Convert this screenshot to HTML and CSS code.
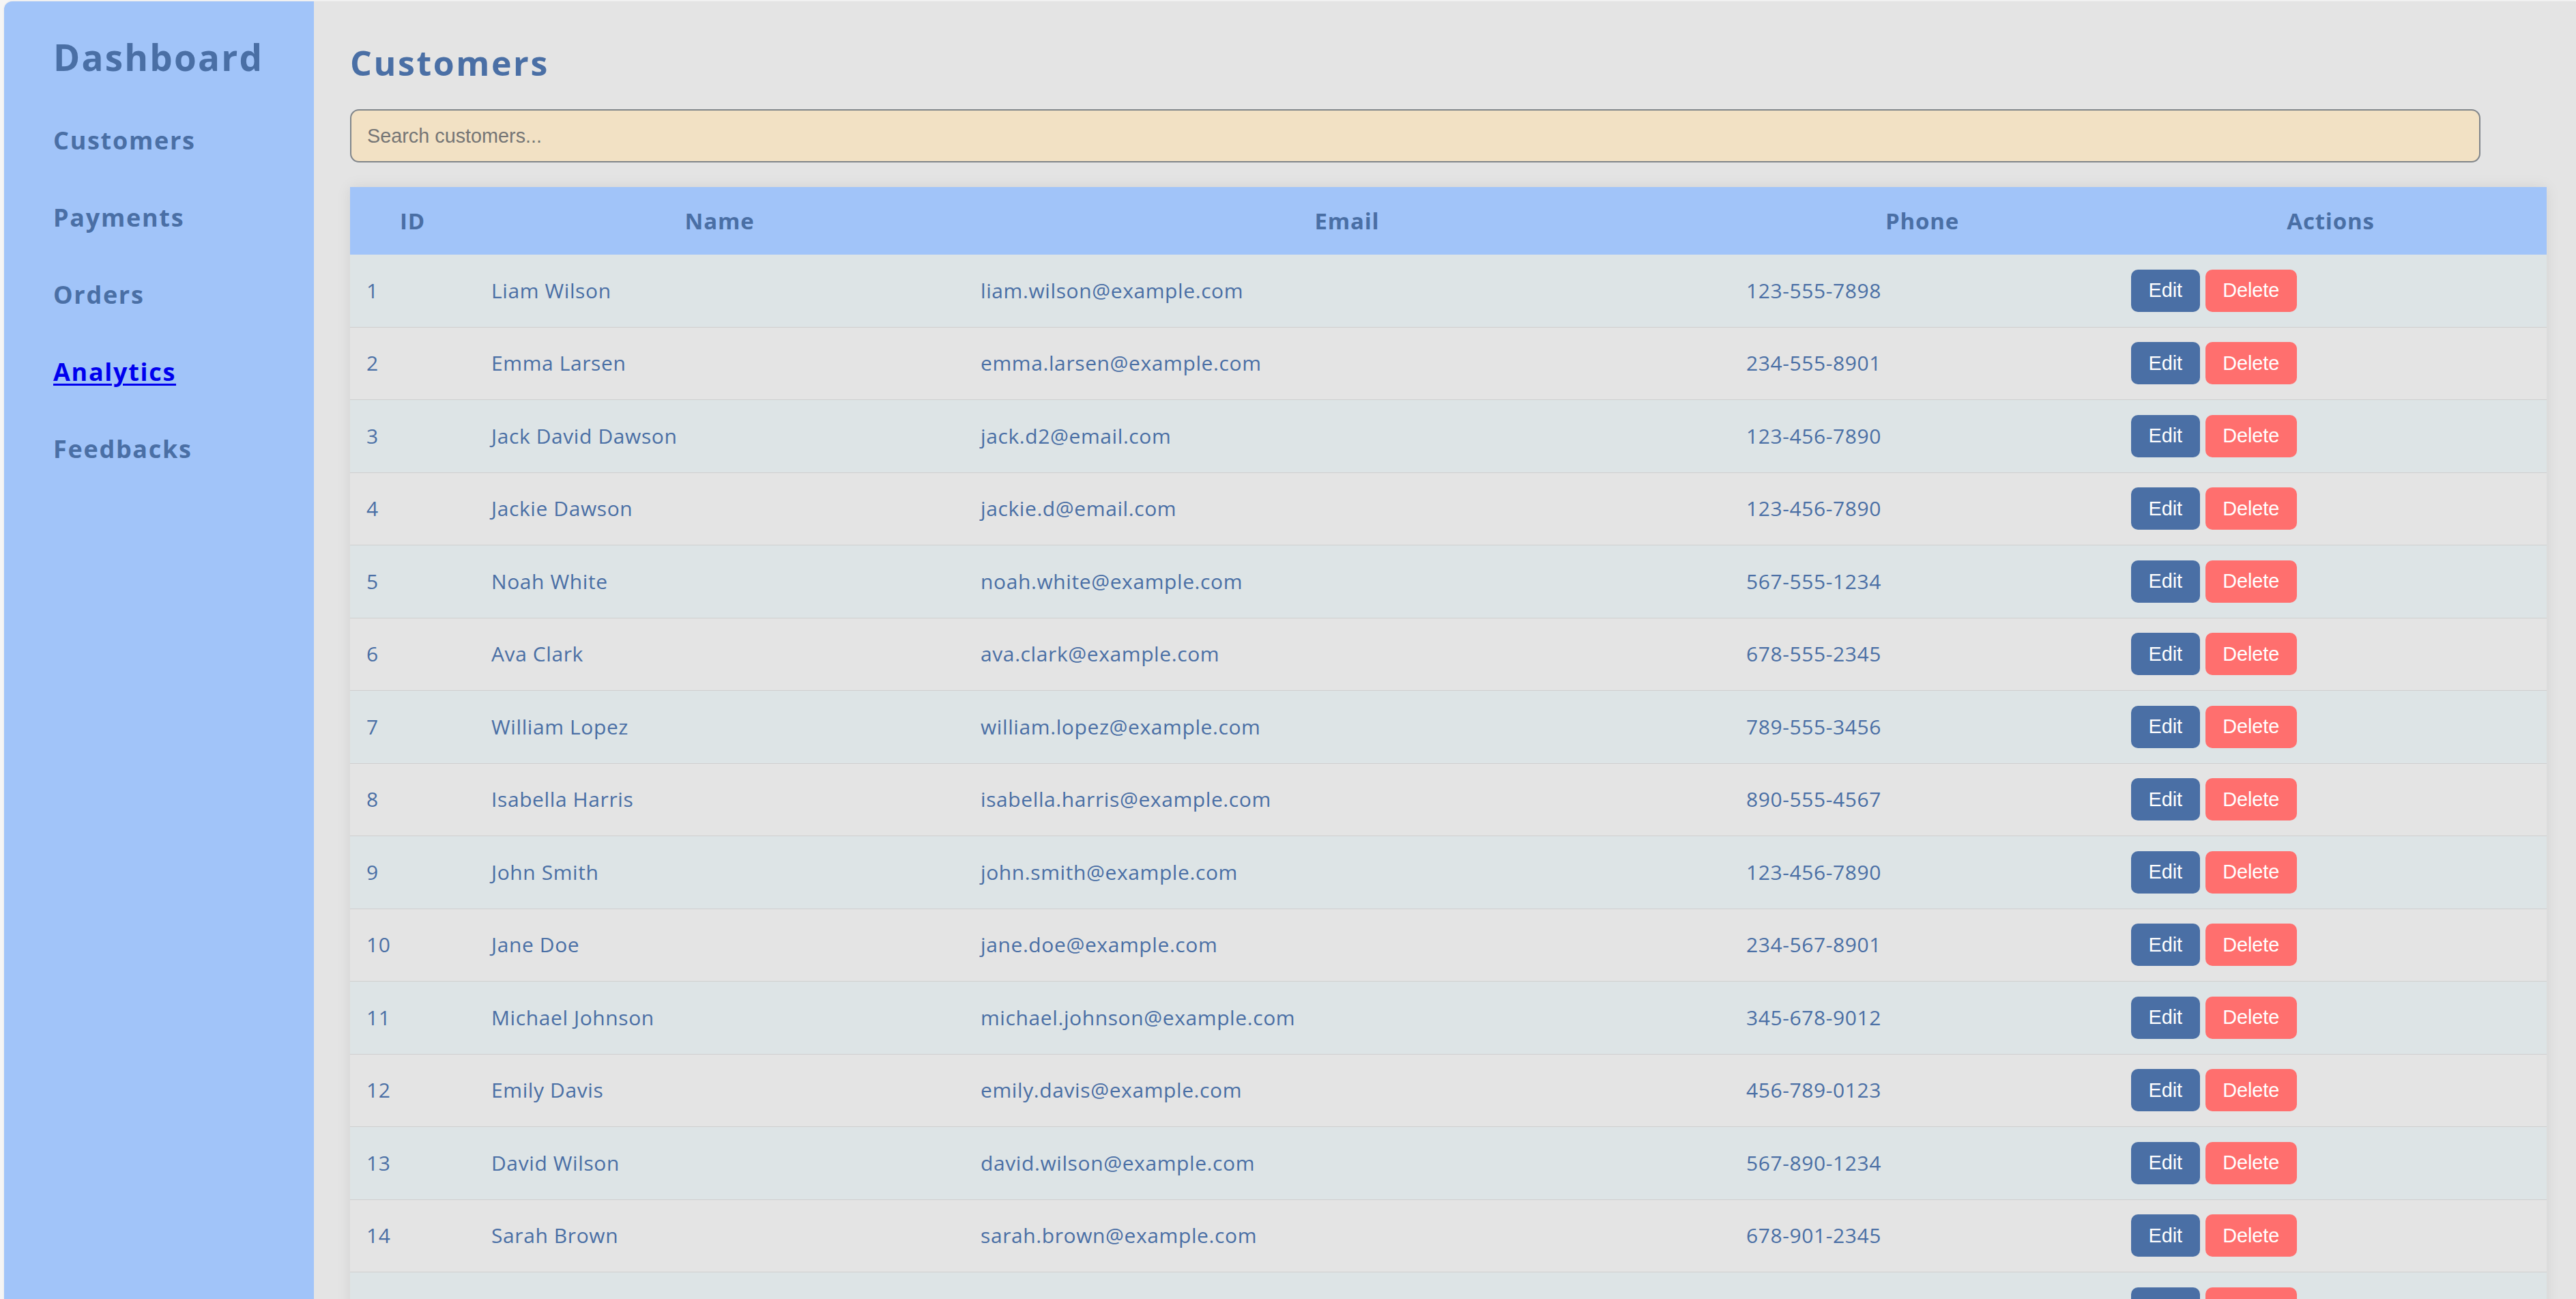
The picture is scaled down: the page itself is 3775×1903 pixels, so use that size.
FILE: index.html
```html
<!DOCTYPE html>
<html lang="en">
<head>
<meta charset="utf-8">
<title>Customers</title>
<link rel="stylesheet" href="styles.css">
</head>
<body>
<div class="app">
  <aside class="sidebar">
    <h2 class="brand">Dashboard</h2>
    <ul class="nav">
      <li><a class="nav-link" href="#">Customers</a></li>
      <li><a class="nav-link" href="#">Payments</a></li>
      <li><a class="nav-link" href="#">Orders</a></li>
      <li><a class="nav-link nav-active" href="#">Analytics</a></li>
      <li><a class="nav-link" href="#">Feedbacks</a></li>
    </ul>
  </aside>
  <main class="main">
    <h1 class="title">Customers</h1>
    <input class="search" type="text" placeholder="Search customers...">
    <table class="grid">
      <colgroup>
        <col class="c-id"><col class="c-name"><col class="c-email"><col class="c-phone"><col class="c-actions">
      </colgroup>
      <thead>
        <tr><th>ID</th><th>Name</th><th>Email</th><th>Phone</th><th>Actions</th></tr>
      </thead>
      <tbody>
        <tr><td>1</td><td>Liam Wilson</td><td>liam.wilson@example.com</td><td>123-555-7898</td><td><div class="actions"><button class="btn btn-edit">Edit</button><button class="btn btn-delete">Delete</button></div></td></tr>
        <tr><td>2</td><td>Emma Larsen</td><td>emma.larsen@example.com</td><td>234-555-8901</td><td><div class="actions"><button class="btn btn-edit">Edit</button><button class="btn btn-delete">Delete</button></div></td></tr>
        <tr><td>3</td><td>Jack David Dawson</td><td>jack.d2@email.com</td><td>123-456-7890</td><td><div class="actions"><button class="btn btn-edit">Edit</button><button class="btn btn-delete">Delete</button></div></td></tr>
        <tr><td>4</td><td>Jackie Dawson</td><td>jackie.d@email.com</td><td>123-456-7890</td><td><div class="actions"><button class="btn btn-edit">Edit</button><button class="btn btn-delete">Delete</button></div></td></tr>
        <tr><td>5</td><td>Noah White</td><td>noah.white@example.com</td><td>567-555-1234</td><td><div class="actions"><button class="btn btn-edit">Edit</button><button class="btn btn-delete">Delete</button></div></td></tr>
        <tr><td>6</td><td>Ava Clark</td><td>ava.clark@example.com</td><td>678-555-2345</td><td><div class="actions"><button class="btn btn-edit">Edit</button><button class="btn btn-delete">Delete</button></div></td></tr>
        <tr><td>7</td><td>William Lopez</td><td>william.lopez@example.com</td><td>789-555-3456</td><td><div class="actions"><button class="btn btn-edit">Edit</button><button class="btn btn-delete">Delete</button></div></td></tr>
        <tr><td>8</td><td>Isabella Harris</td><td>isabella.harris@example.com</td><td>890-555-4567</td><td><div class="actions"><button class="btn btn-edit">Edit</button><button class="btn btn-delete">Delete</button></div></td></tr>
        <tr><td>9</td><td>John Smith</td><td>john.smith@example.com</td><td>123-456-7890</td><td><div class="actions"><button class="btn btn-edit">Edit</button><button class="btn btn-delete">Delete</button></div></td></tr>
        <tr><td>10</td><td>Jane Doe</td><td>jane.doe@example.com</td><td>234-567-8901</td><td><div class="actions"><button class="btn btn-edit">Edit</button><button class="btn btn-delete">Delete</button></div></td></tr>
        <tr><td>11</td><td>Michael Johnson</td><td>michael.johnson@example.com</td><td>345-678-9012</td><td><div class="actions"><button class="btn btn-edit">Edit</button><button class="btn btn-delete">Delete</button></div></td></tr>
        <tr><td>12</td><td>Emily Davis</td><td>emily.davis@example.com</td><td>456-789-0123</td><td><div class="actions"><button class="btn btn-edit">Edit</button><button class="btn btn-delete">Delete</button></div></td></tr>
        <tr><td>13</td><td>David Wilson</td><td>david.wilson@example.com</td><td>567-890-1234</td><td><div class="actions"><button class="btn btn-edit">Edit</button><button class="btn btn-delete">Delete</button></div></td></tr>
        <tr><td>14</td><td>Sarah Brown</td><td>sarah.brown@example.com</td><td>678-901-2345</td><td><div class="actions"><button class="btn btn-edit">Edit</button><button class="btn btn-delete">Delete</button></div></td></tr>
        <tr><td>15</td><td>Chris Taylor</td><td>chris.taylor@example.com</td><td>789-012-3456</td><td><div class="actions"><button class="btn btn-edit">Edit</button><button class="btn btn-delete">Delete</button></div></td></tr>
        <tr><td>16</td><td>Olivia Martin</td><td>olivia.martin@example.com</td><td>890-123-4567</td><td><div class="actions"><button class="btn btn-edit">Edit</button><button class="btn btn-delete">Delete</button></div></td></tr>
      </tbody>
    </table>
  </main>
</div>
</body>
</html>
```
FILE: styles.css
```css
html, body {
  margin: 0;
  padding: 0;
}
body {
  background: #f5f5f5;
  font-family: "Open Sans", "DejaVu Sans", sans-serif;
  color: #4a6fa5;
}
.app {
  display: flex;
  margin: 2px 0 0 6px;
  min-height: calc(100vh - 2px);
  background: #e4e4e4;
  border-top-left-radius: 12px;
  box-shadow: 0 0 3px rgba(0, 0, 0, 0.08);
}
.sidebar {
  flex: none;
  width: 454px;
  box-sizing: border-box;
  padding: 50px 0 0 72px;
  background: #a1c4f9;
  border-top-left-radius: 12px;
}
.brand {
  margin: 0 0 70px;
  font-size: 53px;
  line-height: 64px;
  font-weight: 700;
  letter-spacing: 2.2px;
  color: #4a6fa5;
}
.nav {
  list-style: none;
  margin: 0;
  padding: 0;
  display: flex;
  flex-direction: column;
  gap: 73px;
}
.nav li {
  font-size: 36px;
  line-height: 40px;
}
.nav-link {
  font-weight: 700;
  letter-spacing: 1.7px;
  color: #4a6fa5;
  text-decoration: none;
}
.nav-active {
  color: #0000ee;
  text-decoration: underline;
  text-decoration-thickness: 3px;
  text-underline-offset: 4px;
}
.main {
  flex: 1;
  min-width: 0;
  padding: 60px 43px 0 53px;
}
.title {
  margin: 0 0 38px;
  font-size: 50px;
  line-height: 60px;
  font-weight: 700;
  letter-spacing: 2.6px;
  color: #4a6fa5;
}
.search {
  display: block;
  box-sizing: border-box;
  width: 97%;
  height: 78px;
  margin: 0 0 36px;
  padding: 0 23px;
  background: #f2e1c4;
  border: 2px solid #80858a;
  border-radius: 13px;
  font-family: "Liberation Sans", Arial, sans-serif;
  font-size: 28.8px;
  color: #333;
  outline: none;
}
.search::placeholder {
  color: #757575;
}
.grid {
  width: 100%;
  table-layout: fixed;
  border-collapse: collapse;
  box-shadow: 0 0 20px rgba(0, 0, 0, 0.08);
}
.c-id { width: 183px; }
.c-name { width: 717px; }
.c-email { width: 1122px; }
.c-phone { width: 564px; }
.c-actions { width: 633px; }
.grid th {
  padding: 33px 24px;
  line-height: 33px;
  font-size: 33px;
  font-weight: 700;
  letter-spacing: 0.8px;
  text-align: center;
  background: #a1c4f9;
  color: #4a6fa5;
}
.grid td {
  padding: 21.75px 24px;
  font-size: 30px;
  line-height: 40px;
  letter-spacing: 0.6px;
  text-align: left;
  vertical-align: middle;
  color: #4a6fa5;
  border-bottom: 1px solid #cfcfcf;
  white-space: nowrap;
}
.grid tbody tr:nth-child(odd) td {
  background: #dde4e6;
}
.grid tbody tr:nth-child(even) td {
  background: #e4e4e4;
}
.actions {
  display: flex;
  gap: 8px;
  height: 62px;
}
.btn {
  height: 62px;
  padding: 0 25.5px;
  border: none;
  border-radius: 10px;
  font-family: "Liberation Sans", Arial, sans-serif;
  font-size: 28.8px;
  letter-spacing: 0;
  color: #ffffff;
  cursor: pointer;
}
.btn-edit {
  background: #4a6fa5;
}
.btn-delete {
  background: #ff6f6e;
}
```
